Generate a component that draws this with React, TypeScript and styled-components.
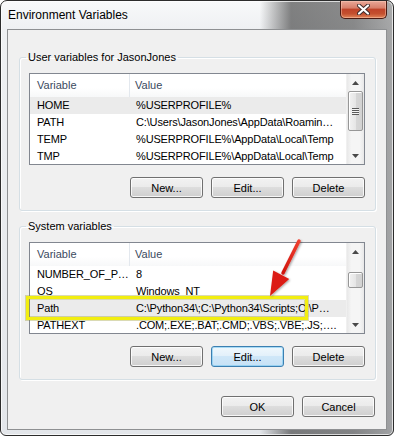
import styled, { createGlobalStyle } from "styled-components";

const GlobalStyle = createGlobalStyle`
  html, body {
    margin: 0;
    padding: 0;
    background: #ffffff;
  }
  body {
    font-family: "Liberation Sans", Arial, sans-serif;
    font-size: 11px;
    color: #000;
  }
`;

const Window = styled.div`
  position: relative;
  box-sizing: border-box;
  width: 394px;
  height: 436px;
  border: 1px solid #2c2c2c;
  border-radius: 7px 7px 6px 6px;
  padding: 0 6px 5px 6px;
  display: flex;
  flex-direction: column;
  background:
    linear-gradient(90deg, rgba(0, 0, 0, 0) 0%, rgba(0, 0, 0, 0) 66%, rgba(30, 30, 30, 0.55) 74%, rgba(50, 50, 50, 0.55) 90%, rgba(80, 80, 80, 0.45) 100%),
    linear-gradient(180deg, #f8f9fa 0px, #eef0f2 30px, #e3e6ea 100%);
  box-shadow: inset 0 0 0 1px rgba(255, 255, 255, 0.7);
`;

const TitleBar = styled.div`
  height: 28px;
  display: flex;
  justify-content: space-between;
  align-items: flex-start;
`;

const Title = styled.span`
  margin: 7px 0 0 1px;
  font-size: 12px;
  line-height: 15px;
  color: #000;
`;

const CloseButton = styled.div`
  width: 47px;
  height: 18px;
  box-sizing: border-box;
  border: 1px solid #4a1a12;
  border-top: none;
  border-radius: 0 0 5px 5px;
  display: flex;
  align-items: center;
  justify-content: center;
  background: linear-gradient(180deg, #e9a898 0%, #d8806c 40%, #c0442a 50%, #c4502f 75%, #e2865a 100%);
  box-shadow: inset 0 0 0 1px rgba(255, 210, 190, 0.45);
`;

const Client = styled.div`
  flex: 1;
  border: 1px solid #8e9092;
  background: #f0f0f0;
  padding: 20px 10px 0 11px;
  display: flex;
  flex-direction: column;
`;

const GroupBox = styled.fieldset<{ $gap?: number }>`
  position: relative;
  margin: ${(p) => p.$gap ?? 0}px 0 0 0;
  padding: 8px 10px 12px 9px;
  border: 1px solid #d5dfe5;
  border-radius: 3px;
  box-shadow: inset 1px 1px 0 #ffffff, 1px 1px 0 #ffffff;
`;

const Legend = styled.legend`
  margin-left: -3px;
  padding: 0 2px;
  font-size: 11px;
  line-height: 15px;
  color: #000;
`;

const ListBox = styled.div`
  position: relative;
  height: 92px;
  box-sizing: border-box;
  border: 1px solid #828790;
  background: #ffffff;
  display: flex;
`;

const ListBody = styled.div`
  flex: 1;
  overflow: hidden;
`;

const HeaderRow = styled.div`
  height: 23px;
  display: grid;
  grid-template-columns: 100px 1fr;
  background: linear-gradient(180deg, #ffffff 0%, #ffffff 60%, #f7f8f9 100%);
`;

const HeaderCell = styled.div<{ $divider?: boolean }>`
  padding-left: ${(p) => (p.$divider ? 5 : 7)}px;
  line-height: 23px;
  color: #3b4a5e;
  border-right: ${(p) => (p.$divider ? "none" : "1px solid #e3e8ee")};
  white-space: nowrap;
  overflow: hidden;
`;

const Row = styled.div<{ $selected?: boolean }>`
  height: 17px;
  display: grid;
  grid-template-columns: 100px 1fr;
  background: ${(p) => (p.$selected ? "#ebebeb" : "transparent")};
`;

const Cell = styled.div<{ $first?: boolean }>`
  padding-left: ${(p) => (p.$first ? 7 : 6)}px;
  line-height: 17px;
  letter-spacing: -0.15px;
  white-space: nowrap;
  overflow: hidden;
`;

const ScrollBar = styled.div`
  width: 17px;
  display: flex;
  flex-direction: column;
  background: linear-gradient(90deg, #e8e8e8 0%, #f5f5f5 25%, #f5f5f5 75%, #e8e8e8 100%);
  border-left: 1px solid #f0f0f0;
`;

const ArrowButton = styled.div`
  height: 17px;
  display: flex;
  align-items: center;
  justify-content: center;
`;

const Track = styled.div`
  flex: 1;
  display: flex;
  flex-direction: column;
  align-items: center;
`;

const Thumb = styled.div<{ $offset: number; $size: number }>`
  margin-top: ${(p) => p.$offset}px;
  width: 15px;
  height: ${(p) => p.$size}px;
  box-sizing: border-box;
  border: 1px solid #979797;
  border-radius: 2px;
  background: linear-gradient(90deg, #f2f2f2 0%, #e6e6e6 50%, #d6d6d6 51%, #d2d2d2 100%);
  box-shadow: inset 1px 1px 0 #ffffff;
  display: flex;
  align-items: center;
  justify-content: center;
`;

const Grip = styled.div`
  width: 7px;
  height: 7px;
  background: repeating-linear-gradient(180deg, #5a5a5a 0px, #5a5a5a 1px, #f4f4f4 1px, #f4f4f4 2px);
`;

const ButtonRow = styled.div`
  margin-top: 12px;
  display: flex;
  justify-content: flex-end;
  gap: 8px;
`;

const Footer = styled.div`
  margin-top: 16px;
  padding-right: 1px;
  display: flex;
  justify-content: flex-end;
  gap: 8px;
`;

const Button = styled.button<{ $focused?: boolean }>`
  width: 73px;
  height: 21px;
  box-sizing: border-box;
  padding: 0;
  border: 1px solid ${(p) => (p.$focused ? "#3c7fb1" : "#707070")};
  border-radius: 3px;
  font-family: "Liberation Sans", Arial, sans-serif;
  font-size: 11px;
  color: #000;
  background: ${(p) =>
    p.$focused
      ? "linear-gradient(180deg, #f0f8fd 0%, #e2f0fa 48%, #cfe7f8 50%, #c7e2f6 100%)"
      : "linear-gradient(180deg, #f2f2f2 0%, #ebebeb 48%, #dddddd 50%, #cfcfcf 100%)"};
  box-shadow: inset 0 0 0 1px ${(p) => (p.$focused ? "rgba(120, 200, 240, 0.6)" : "rgba(255, 255, 255, 0.8)")};
`;

const Highlight = styled.div`
  position: absolute;
  left: -4px;
  top: 53px;
  width: 282px;
  height: 24px;
  box-sizing: border-box;
  border: 3px solid #f2ee10;
  box-shadow: 0 0 0 1px rgba(150, 150, 40, 0.35), inset 0 0 0 1px rgba(150, 150, 40, 0.35);
`;

const Annotation = styled.svg`
  position: absolute;
  left: 229px;
  top: -7px;
  overflow: visible;
`;

type Variable = [string, string];

const userVars: Variable[] = [
  ["HOME", "%USERPROFILE%"],
  ["PATH", "C:\\Users\\JasonJones\\AppData\\Roamin…"],
  ["TEMP", "%USERPROFILE%\\AppData\\Local\\Temp"],
  ["TMP", "%USERPROFILE%\\AppData\\Local\\Temp"],
];

const systemVars: Variable[] = [
  ["NUMBER_OF_P…", "8"],
  ["OS", "Windows_NT"],
  ["Path", "C:\\Python34\\;C:\\Python34\\Scripts;C:\\P…"],
  ["PATHEXT", ".COM;.EXE;.BAT;.CMD;.VBS;.VBE;.JS;…."],
];

const UpArrow = () => (
  <svg width="7" height="4" viewBox="0 0 7 4">
    <polygon points="3.5,0 7,4 0,4" fill="#4a4a4a" />
  </svg>
);

const DownArrow = () => (
  <svg width="7" height="4" viewBox="0 0 7 4">
    <polygon points="0,0 7,0 3.5,4" fill="#4a4a4a" />
  </svg>
);

const CloseGlyph = () => (
  <svg width="13" height="11" viewBox="0 0 13 11">
    <path d="M2 1.5 L11 9.5 M11 1.5 L2 9.5" stroke="#3a2a2a" strokeWidth="4" strokeLinecap="round" />
    <path d="M2 1.5 L11 9.5 M11 1.5 L2 9.5" stroke="#ffffff" strokeWidth="2.2" strokeLinecap="round" />
  </svg>
);

type VarListProps = {
  rows: Variable[];
  selected: number;
  thumbOffset: number;
  thumbSize: number;
  grip?: boolean;
  children?: React.ReactNode;
};

const VarList = ({ rows, selected, thumbOffset, thumbSize, grip, children }: VarListProps) => (
  <ListBox>
    <ListBody>
      <HeaderRow>
        <HeaderCell>Variable</HeaderCell>
        <HeaderCell $divider>Value</HeaderCell>
      </HeaderRow>
      {rows.map(([name, value], i) => (
        <Row key={name} $selected={i === selected}>
          <Cell $first>{name}</Cell>
          <Cell>{value}</Cell>
        </Row>
      ))}
    </ListBody>
    <ScrollBar>
      <ArrowButton>
        <UpArrow />
      </ArrowButton>
      <Track>
        <Thumb $offset={thumbOffset} $size={thumbSize}>
          {grip && <Grip />}
        </Thumb>
      </Track>
      <ArrowButton>
        <DownArrow />
      </ArrowButton>
    </ScrollBar>
    {children}
  </ListBox>
);

export default function App() {
  return (
    <>
      <GlobalStyle />
      <Window>
        <TitleBar>
          <Title>Environment Variables</Title>
          <CloseButton>
            <CloseGlyph />
          </CloseButton>
        </TitleBar>
        <Client>
          <GroupBox>
            <Legend>User variables for JasonJones</Legend>
            <VarList rows={userVars} selected={0} thumbOffset={0} thumbSize={40} grip />
            <ButtonRow>
              <Button>New...</Button>
              <Button>Edit...</Button>
              <Button>Delete</Button>
            </ButtonRow>
          </GroupBox>
          <GroupBox $gap={8}>
            <Legend>System variables</Legend>
            <VarList rows={systemVars} selected={2} thumbOffset={12} thumbSize={16}>
              <Highlight />
              <Annotation width="46" height="64" viewBox="0 0 46 64">
                <defs>
                  <filter id="arrowShadow" x="-30%" y="-30%" width="160%" height="160%">
                    <feDropShadow dx="1" dy="1" stdDeviation="1" floodColor="#000" floodOpacity="0.35" />
                  </filter>
                  <linearGradient id="arrowFill" x1="1" y1="0" x2="0" y2="1">
                    <stop offset="0%" stopColor="#f04030" />
                    <stop offset="100%" stopColor="#d0140c" />
                  </linearGradient>
                </defs>
                <g filter="url(#arrowShadow)">
                  <line x1="40" y1="5" x2="24" y2="37" stroke="url(#arrowFill)" strokeWidth="3.5" strokeLinecap="round" />
                  <polygon points="11,60 14.2,34.6 30.2,43" fill="#dc1c12" />
                </g>
              </Annotation>
            </VarList>
            <ButtonRow>
              <Button>New...</Button>
              <Button $focused>Edit...</Button>
              <Button>Delete</Button>
            </ButtonRow>
          </GroupBox>
          <Footer>
            <Button>OK</Button>
            <Button>Cancel</Button>
          </Footer>
        </Client>
      </Window>
    </>
  );
}
